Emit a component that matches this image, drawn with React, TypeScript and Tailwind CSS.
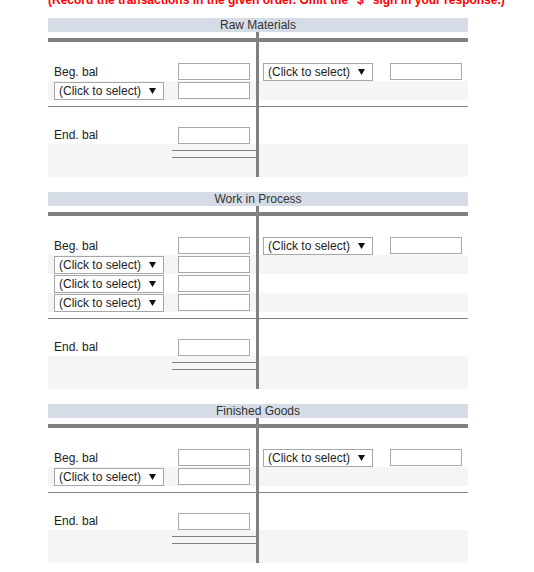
const Input = () => (
  <input type="text" className="h-[17px] w-[72px] border border-[#a9a9a9] bg-white" />
);

const Select = () => (
  <div className="flex h-[18px] w-[110px] items-center justify-between border border-[#a6a6a6] bg-white pl-[4px] pr-[7px] text-[12px] text-[#222]">
    <span>(Click to select)</span>
    <svg width="7" height="6" viewBox="0 0 7 6">
      <path d="M0 0h7L3.5 6z" fill="#111" />
    </svg>
  </div>
);

type AccountProps = { title: string; entries: number };

const Account = ({ title, entries }: AccountProps) => {
  const rows = Array.from({ length: entries });
  return (
    <div className="w-[420px]">
      <div className="h-[14px] bg-[#d6dce6] text-center text-[12px] leading-[14px] text-[#333]">
        {title}
      </div>
      <div className="flex">
        {/* debit side */}
        <div className="w-[208px]">
          <div className="h-[6px]" />
          <div className="h-[4px] bg-[#808080]" />
          <div className="h-[20px]" />
          <div className="flex h-[19px] items-center justify-between px-[6px]">
            <span>Beg. bal</span>
            <Input />
          </div>
          {rows.map((_, i) => (
            <div
              key={i}
              className={
                i % 2 === 0
                  ? "flex h-[19px] items-center justify-between bg-[#f5f5f5] px-[6px]"
                  : "flex h-[19px] items-center justify-between px-[6px]"
              }
            >
              <Select />
              <Input />
            </div>
          ))}
          <div className="h-[6px]" />
          <div className="h-px bg-[#808080]" />
          <div className="h-[19px]" />
          <div className="flex h-[18px] items-center justify-between px-[6px]">
            <span>End. bal</span>
            <Input />
          </div>
          <div className="h-[33px] bg-[#f5f5f5] pt-[6px]">
            <div className="ml-auto h-px w-[84px] bg-[#808080]" />
            <div className="ml-auto mt-[6px] h-px w-[84px] bg-[#808080]" />
          </div>
        </div>

        <div className="w-[3px] bg-[#808080]" />

        {/* credit side */}
        <div className="w-[209px]">
          <div className="h-[6px]" />
          <div className="h-[4px] bg-[#808080]" />
          <div className="h-[20px]" />
          <div className="flex h-[19px] items-center justify-between pl-[4px] pr-[6px]">
            <Select />
            <Input />
          </div>
          {rows.map((_, i) => (
            <div key={i} className={i % 2 === 0 ? "h-[19px] bg-[#f5f5f5]" : "h-[19px]"} />
          ))}
          <div className="h-[6px]" />
          <div className="h-px bg-[#808080]" />
          <div className="h-[19px]" />
          <div className="h-[18px]" />
          <div className="h-[33px] bg-[#f5f5f5]" />
        </div>
      </div>
    </div>
  );
};

export default function App() {
  return (
    <div className="min-h-screen overflow-hidden bg-white pl-[48px] font-['Liberation_Sans',Arial,sans-serif] text-[12px] text-[#222]">
      <div className="-mt-[7px] whitespace-nowrap text-[12px] font-bold leading-[14px] text-[#ff0000]">
        (Record the transactions in the given order. Omit the "$" sign in your response.)
      </div>
      <div className="mt-[11px] flex flex-col gap-[15px]">
        <Account title="Raw Materials" entries={1} />
        <Account title="Work in Process" entries={3} />
        <Account title="Finished Goods" entries={1} />
      </div>
    </div>
  );
}
